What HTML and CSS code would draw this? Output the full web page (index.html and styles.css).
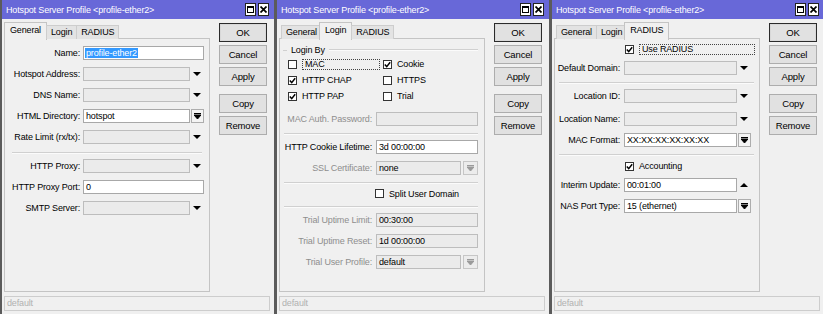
FILE: index.html
```html
<!DOCTYPE html>
<html lang="en">

<head>
    <meta charset="UTF-8" />
    <title>Hotspot Server Profile</title>
    <link rel="stylesheet" href="styles.css">
</head>

<body>
    <div class="desktop">
        <!-- General tab -->
        <div class="window">
            <div class="titlebar">
                <span class="title">Hotspot Server Profile &lt;profile-ether2&gt;</span>
                <span class="tb-btns">
                    <span class="tb-btn"><span class="max-icon"></span></span>
                    <span class="tb-btn"><svg width="7" height="7" viewBox="0 0 7 7"><path d="M0.5 0.5L6.5 6.5M6.5 0.5L0.5 6.5" stroke="#000" stroke-width="1.7" /></svg></span>
                </span>
            </div>
            <div class="win-body">
                <div class="main">
                    <div class="tabs">
                        <span class="tab active">General</span>
                        <span class="tab">Login</span>
                        <span class="tab">RADIUS</span>
                    </div>
                    <div class="panel p-general">
                        <div class="row">
                            <span class="lbl">Name:</span>
                            <div class="field full"><span class="hl">profile-ether2</span></div>
                        </div>
                        <div class="row">
                            <span class="lbl">Hotspot Address:</span>
                            <div class="field off short"></div><span class="drop"></span>
                        </div>
                        <div class="row">
                            <span class="lbl">DNS Name:</span>
                            <div class="field off short"></div><span class="drop"></span>
                        </div>
                        <div class="row">
                            <span class="lbl">HTML Directory:</span>
                            <div class="field short">hotspot</div>
                            <span class="pick"><svg width="7" height="6" viewBox="0 0 7 6"><path d="M0 0.5H7M0 2H7L3.5 6Z" stroke="#000" stroke-width="1" fill="#000" /></svg></span>
                        </div>
                        <div class="row">
                            <span class="lbl">Rate Limit (rx/tx):</span>
                            <div class="field off short"></div><span class="drop"></span>
                        </div>
                        <div class="sep"></div>
                        <div class="row">
                            <span class="lbl">HTTP Proxy:</span>
                            <div class="field off short"></div><span class="drop"></span>
                        </div>
                        <div class="row">
                            <span class="lbl">HTTP Proxy Port:</span>
                            <div class="field full">0</div>
                        </div>
                        <div class="row">
                            <span class="lbl">SMTP Server:</span>
                            <div class="field off short"></div><span class="drop"></span>
                        </div>
                    </div>
                </div>
                <div class="actions">
                    <button class="btn default">OK</button>
                    <button class="btn">Cancel</button>
                    <button class="btn">Apply</button>
                    <button class="btn spaced">Copy</button>
                    <button class="btn">Remove</button>
                </div>
            </div>
            <div class="status">default</div>
        </div>

        <!-- Login tab -->
        <div class="window">
            <div class="titlebar">
                <span class="title">Hotspot Server Profile &lt;profile-ether2&gt;</span>
                <span class="tb-btns">
                    <span class="tb-btn"><span class="max-icon"></span></span>
                    <span class="tb-btn"><svg width="7" height="7" viewBox="0 0 7 7"><path d="M0.5 0.5L6.5 6.5M6.5 0.5L0.5 6.5" stroke="#000" stroke-width="1.7" /></svg></span>
                </span>
            </div>
            <div class="win-body">
                <div class="main">
                    <div class="tabs">
                        <span class="tab">General</span>
                        <span class="tab active">Login</span>
                        <span class="tab">RADIUS</span>
                    </div>
                    <div class="panel p-login">
                        <div class="group-head"><span class="dash"></span><span>Login By</span><span class="line"></span></div>
                        <div class="check-grid">
                            <label class="check"><span class="cb"></span><span class="focus mac">MAC</span></label>
                            <label class="check"><span class="cb"><svg width="7" height="7" viewBox="0 0 7 7"><path d="M0.8 3.6L2.7 5.6L6.2 1.2" stroke="#000" stroke-width="1.5" fill="none" /></svg></span>Cookie</label>
                            <label class="check"><span class="cb"><svg width="7" height="7" viewBox="0 0 7 7"><path d="M0.8 3.6L2.7 5.6L6.2 1.2" stroke="#000" stroke-width="1.5" fill="none" /></svg></span>HTTP CHAP</label>
                            <label class="check"><span class="cb"></span>HTTPS</label>
                            <label class="check"><span class="cb"><svg width="7" height="7" viewBox="0 0 7 7"><path d="M0.8 3.6L2.7 5.6L6.2 1.2" stroke="#000" stroke-width="1.5" fill="none" /></svg></span>HTTP PAP</label>
                            <label class="check"><span class="cb"></span>Trial</label>
                        </div>
                        <div class="row gap-top">
                            <span class="lbl dim">MAC Auth. Password:</span>
                            <div class="field off full"></div>
                        </div>
                        <div class="sep"></div>
                        <div class="row">
                            <span class="lbl">HTTP Cookie Lifetime:</span>
                            <div class="field full">3d 00:00:00</div>
                        </div>
                        <div class="row">
                            <span class="lbl dim">SSL Certificate:</span>
                            <div class="field off short">none</div>
                            <span class="pick dim"><svg width="7" height="6" viewBox="0 0 7 6"><path d="M0 0.5H7M0 2H7L3.5 6Z" stroke="#9a9a9a" stroke-width="1" fill="#9a9a9a" /></svg></span>
                        </div>
                        <div class="sep"></div>
                        <div class="row check-row">
                            <label class="check"><span class="cb"></span>Split User Domain</label>
                        </div>
                        <div class="sep"></div>
                        <div class="row">
                            <span class="lbl dim">Trial Uptime Limit:</span>
                            <div class="field off full">00:30:00</div>
                        </div>
                        <div class="row">
                            <span class="lbl dim">Trial Uptime Reset:</span>
                            <div class="field off full">1d 00:00:00</div>
                        </div>
                        <div class="row">
                            <span class="lbl dim">Trial User Profile:</span>
                            <div class="field off short">default</div>
                            <span class="pick dim"><svg width="7" height="6" viewBox="0 0 7 6"><path d="M0 0.5H7M0 2H7L3.5 6Z" stroke="#9a9a9a" stroke-width="1" fill="#9a9a9a" /></svg></span>
                        </div>
                    </div>
                </div>
                <div class="actions">
                    <button class="btn default">OK</button>
                    <button class="btn">Cancel</button>
                    <button class="btn">Apply</button>
                    <button class="btn spaced">Copy</button>
                    <button class="btn">Remove</button>
                </div>
            </div>
            <div class="status">default</div>
        </div>

        <!-- RADIUS tab -->
        <div class="window">
            <div class="titlebar">
                <span class="title">Hotspot Server Profile &lt;profile-ether2&gt;</span>
                <span class="tb-btns">
                    <span class="tb-btn"><span class="max-icon"></span></span>
                    <span class="tb-btn"><svg width="7" height="7" viewBox="0 0 7 7"><path d="M0.5 0.5L6.5 6.5M6.5 0.5L0.5 6.5" stroke="#000" stroke-width="1.7" /></svg></span>
                </span>
            </div>
            <div class="win-body">
                <div class="main">
                    <div class="tabs">
                        <span class="tab">General</span>
                        <span class="tab">Login</span>
                        <span class="tab active">RADIUS</span>
                    </div>
                    <div class="panel p-radius">
                        <div class="row check-row first">
                            <label class="check"><span class="cb"><svg width="7" height="7" viewBox="0 0 7 7"><path d="M0.8 3.6L2.7 5.6L6.2 1.2" stroke="#000" stroke-width="1.5" fill="none" /></svg></span><span class="focus radius">Use RADIUS</span></label>
                        </div>
                        <div class="row">
                            <span class="lbl">Default Domain:</span>
                            <div class="field off short"></div><span class="drop"></span>
                        </div>
                        <div class="sep"></div>
                        <div class="row">
                            <span class="lbl">Location ID:</span>
                            <div class="field off short"></div><span class="drop"></span>
                        </div>
                        <div class="row gap-top">
                            <span class="lbl">Location Name:</span>
                            <div class="field off short"></div><span class="drop"></span>
                        </div>
                        <div class="row">
                            <span class="lbl">MAC Format:</span>
                            <div class="field short">XX:XX:XX:XX:XX:XX</div>
                            <span class="pick"><svg width="7" height="6" viewBox="0 0 7 6"><path d="M0 0.5H7M0 2H7L3.5 6Z" stroke="#000" stroke-width="1" fill="#000" /></svg></span>
                        </div>
                        <div class="sep"></div>
                        <div class="row check-row acct">
                            <label class="check"><span class="cb"><svg width="7" height="7" viewBox="0 0 7 7"><path d="M0.8 3.6L2.7 5.6L6.2 1.2" stroke="#000" stroke-width="1.5" fill="none" /></svg></span>Accounting</label>
                        </div>
                        <div class="row">
                            <span class="lbl">Interim Update:</span>
                            <div class="field short">00:01:00</div><span class="drop up"></span>
                        </div>
                        <div class="row">
                            <span class="lbl">NAS Port Type:</span>
                            <div class="field short">15 (ethernet)</div>
                            <span class="pick"><svg width="7" height="6" viewBox="0 0 7 6"><path d="M0 0.5H7M0 2H7L3.5 6Z" stroke="#000" stroke-width="1" fill="#000" /></svg></span>
                        </div>
                    </div>
                </div>
                <div class="actions">
                    <button class="btn default">OK</button>
                    <button class="btn">Cancel</button>
                    <button class="btn">Apply</button>
                    <button class="btn spaced">Copy</button>
                    <button class="btn">Remove</button>
                </div>
            </div>
            <div class="status">default</div>
        </div>
    </div>
</body>

</html>
```

FILE: styles.css
```css
body {
    margin: 0;
    background: #5b5b5b;
    font-family: "Liberation Sans", Arial, sans-serif;
    font-size: 9px;
    letter-spacing: -0.15px;
    color: #000;
    overflow: hidden;
}

.desktop {
    display: flex;
    gap: 3px;
    padding-left: 2px;
    height: 314px;
}

.window {
    width: 272px;
    flex: none;
    background: #f0f0f0;
    display: flex;
    flex-direction: column;
}

/* title bar */
.titlebar {
    height: 19px;
    flex: none;
    background: #6868d8;
    color: #fff;
    display: flex;
    align-items: center;
    justify-content: space-between;
    padding: 0 5px 0 4px;
}

.tb-btns {
    display: flex;
    gap: 2px;
}

.tb-btn {
    width: 11px;
    height: 13px;
    box-sizing: border-box;
    background: #fff;
    border: 1px solid #222;
    display: flex;
    align-items: center;
    justify-content: center;
}

.max-icon {
    width: 7px;
    height: 7px;
    box-sizing: border-box;
    border: 1px solid #000;
    border-top-width: 2px;
}

/* body */
.win-body {
    display: flex;
    padding: 3px 0 0 2px;
}

.main {
    width: 206px;
    display: flex;
    flex-direction: column;
}

.tabs {
    display: flex;
    align-items: flex-end;
    height: 17px;
    padding-left: 2px;
    position: relative;
    z-index: 1;
}

.tab {
    height: 14px;
    box-sizing: border-box;
    padding: 0 4px;
    line-height: 13px;
    background: #e3e3e3;
    border: 1px solid #cdcdcd;
    border-bottom: none;
    margin-right: -1px;
}

.tab.active {
    height: 18px;
    line-height: 15px;
    padding: 0 5px;
    background: #f0f0f0;
    border-color: #c4c4c4;
    margin-left: -2px;
    margin-bottom: -1px;
}

.panel {
    height: 254px;
    box-sizing: border-box;
    margin-top: -1px;
    border: 1px solid #c4c4c4;
    background: #f0f0f0;
    padding-top: 3px;
}

.row {
    display: flex;
    align-items: center;
    height: 21px;
}

.lbl {
    text-align: right;
    padding-right: 3px;
    box-sizing: border-box;
    white-space: nowrap;
}

.dim {
    color: #8e8e8e;
}

.field {
    height: 14px;
    box-sizing: border-box;
    border: 1px solid #a8a8a8;
    background: #fff;
    padding: 0 2px;
    line-height: 12px;
    white-space: nowrap;
    overflow: hidden;
}

.field.off {
    background: #ebebeb;
    border-color: #bdbdbd;
}

.hl {
    background: #3399ff;
    color: #fff;
    margin-left: -1px;
    padding: 0 1px;
}

.drop {
    width: 14px;
    height: 14px;
    display: flex;
    align-items: center;
    justify-content: center;
}

.drop::before {
    content: "";
    border-left: 4px solid transparent;
    border-right: 4px solid transparent;
    border-top: 4px solid #000;
}

.drop.up::before {
    border-top: none;
    border-bottom: 4px solid #000;
}

.pick {
    height: 14px;
    box-sizing: border-box;
    border: 1px solid #adadad;
    background: #f4f4f4;
    display: flex;
    align-items: center;
    justify-content: center;
}

.pick.dim {
    background: #ececec;
    border-color: #c6c6c6;
}

.sep {
    height: 0;
    border-top: 1px solid #d0d0d0;
    border-bottom: 1px solid #fbfbfb;
    margin-top: 5px;
    margin-bottom: 1px;
}

/* checkboxes */
.check {
    display: flex;
    align-items: center;
    gap: 5px;
    white-space: nowrap;
}

.cb {
    width: 9px;
    height: 9px;
    flex: none;
    box-sizing: border-box;
    border: 1px solid #333;
    background: #fff;
    display: flex;
    align-items: center;
    justify-content: center;
}

.focus {
    border: 1px dotted #444;
    padding: 0 2px;
    line-height: 9px;
    box-sizing: border-box;
}

/* General */
.p-general .lbl {
    width: 78px;
}

.p-general .full {
    width: 121px;
}

.p-general .short {
    width: 107px;
}

.p-general .pick {
    width: 13px;
    margin-left: 1px;
}

.p-general .sep {
    margin-left: 7px;
    margin-right: 7px;
}

/* Login */
.p-login {
    padding-top: 5px;
}

.p-login .lbl {
    width: 96px;
    padding-right: 4px;
}

.p-login .full {
    width: 102px;
}

.p-login .short {
    width: 85px;
}

.p-login .pick {
    width: 15px;
    margin-left: 2px;
}

.p-login .sep {
    margin: 4px 6px 1px 4px;
}

.group-head {
    display: flex;
    align-items: center;
    gap: 4px;
    height: 12px;
    padding-left: 3px;
    margin-right: 6px;
}

.group-head .dash {
    width: 4px;
    border-top: 1px solid #d0d0d0;
}

.group-head .line {
    flex: 1;
    border-top: 1px solid #d0d0d0;
    border-bottom: 1px solid #fbfbfb;
}

.check-grid {
    display: grid;
    grid-template-columns: 95px auto;
    grid-auto-rows: 16px;
    align-items: center;
    padding-left: 8px;
}

.focus.mac {
    width: 78px;
}

.gap-top {
    margin-top: 4px;
}

.p-login .check-row {
    height: 17px;
    padding-left: 95px;
}

/* RADIUS */
.p-radius .lbl {
    width: 69px;
    padding-right: 4px;
}

.p-radius .short {
    width: 113px;
}

.p-radius .pick {
    width: 13px;
    margin-left: 1px;
}

.p-radius .sep {
    margin: 4px 5px 1px 4px;
}

.p-radius .check-row {
    padding-left: 70px;
}

.p-radius .check-row.first {
    height: 15px;
}

.p-radius .gap-top {
    margin-top: 2px;
}

.p-radius .acct {
    height: 16px;
    margin-top: 2px;
}

.focus.radius {
    width: 116px;
}

/* buttons */
.actions {
    display: flex;
    flex-direction: column;
    gap: 3px;
    width: 48px;
    margin-left: 9px;
    padding-top: 1px;
}

.btn {
    height: 19px;
    padding: 0;
    font: inherit;
    letter-spacing: inherit;
    font-size: 9.5px;
    color: #000;
    background: #e1e1e1;
    border: 1px solid #adadad;
}

.btn.default {
    border-color: #2b2b2b;
    box-shadow: inset 0 0 0 1px #d8d8d8;
}

.btn.spaced {
    margin-top: 5px;
}

.status {
    height: 15px;
    box-sizing: border-box;
    margin: 4px 4px 3px 2px;
    border: 1px solid #cdcdcd;
    background: #f0f0f0;
    color: #b0b0b0;
    padding-left: 2px;
    line-height: 13px;
}
```
